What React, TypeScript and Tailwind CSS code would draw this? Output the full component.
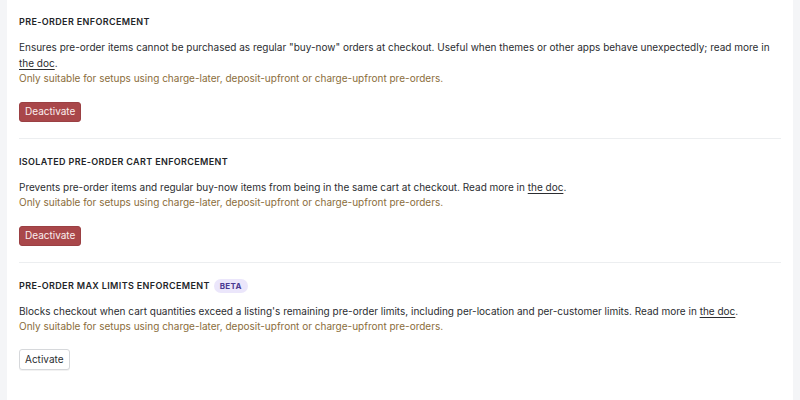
import React from 'react';

interface Enforcement {
  title: string;
  beta?: boolean;
  description: React.ReactNode;
  active: boolean;
}

const DocLink = () => <span className="underline underline-offset-[2px]">the doc</span>;

const items: Enforcement[] = [
  {
    title: 'PRE-ORDER ENFORCEMENT',
    description: (
      <>
        Ensures pre-order items cannot be purchased as regular "buy-now" orders at checkout. Useful when themes or
        other apps behave unexpectedly; read more in <DocLink />.
      </>
    ),
    active: true,
  },
  {
    title: 'ISOLATED PRE-ORDER CART ENFORCEMENT',
    description: (
      <>
        Prevents pre-order items and regular buy-now items from being in the same cart at checkout. Read more in{' '}
        <DocLink />.
      </>
    ),
    active: true,
  },
  {
    title: 'PRE-ORDER MAX LIMITS ENFORCEMENT',
    beta: true,
    description: (
      <>
        Blocks checkout when cart quantities exceed a listing's remaining pre-order limits, including per-location
        and per-customer limits. Read more in <DocLink />.
      </>
    ),
    active: false,
  },
];

export default function App() {
  return (
    <div
      className="w-[800px] h-[400px] bg-[#f4f5f7] px-[7px] overflow-hidden"
      style={{ fontFamily: 'Inter, "Noto Sans", sans-serif' }}
    >
      <div className="bg-white h-full px-3">
        {items.map((item, index) => (
          <div
            key={item.title}
            className={`${index === 0 ? 'pt-[15px]' : 'pt-[16px]'} pb-[16px] ${
              index < items.length - 1 ? 'border-b border-[#eceef0]' : ''
            }`}
          >
            {/* Heading */}
            <div className="flex items-center gap-[4px] h-[14px]">
              <h3 className="text-[9px] font-semibold tracking-[0.04em] text-[#222427]">{item.title}</h3>
              {item.beta && (
                <span className="px-[6px] h-[14px] leading-[14px] rounded-full bg-[#ebe6fb] text-[#4a3a92] text-[8px] font-bold tracking-[0.04em]">
                  BETA
                </span>
              )}
            </div>

            {/* Description */}
            <div className="mt-[11px] text-[10px] leading-[15.5px]">
              <p className="text-[#2b2d31]">{item.description}</p>
              <p className="text-[#8a6d3b]">
                Only suitable for setups using charge-later, deposit-upfront or charge-upfront pre-orders.
              </p>
            </div>

            {/* Action */}
            <div className="mt-[15px] flex">
              {item.active ? (
                <button className="h-[20px] px-[5px] rounded-[3px] bg-[#a9474a] border border-[#9b4043] text-[#fbeeee] text-[10px]">
                  Deactivate
                </button>
              ) : (
                <button className="h-[21px] px-[5px] -mt-[1px] rounded-[3px] bg-white border border-[#d6d8db] text-[#2a2d31] text-[10px] shadow-[0_1px_0_rgba(0,0,0,0.05)]">
                  Activate
                </button>
              )}
            </div>
          </div>
        ))}
      </div>
    </div>
  );
}
